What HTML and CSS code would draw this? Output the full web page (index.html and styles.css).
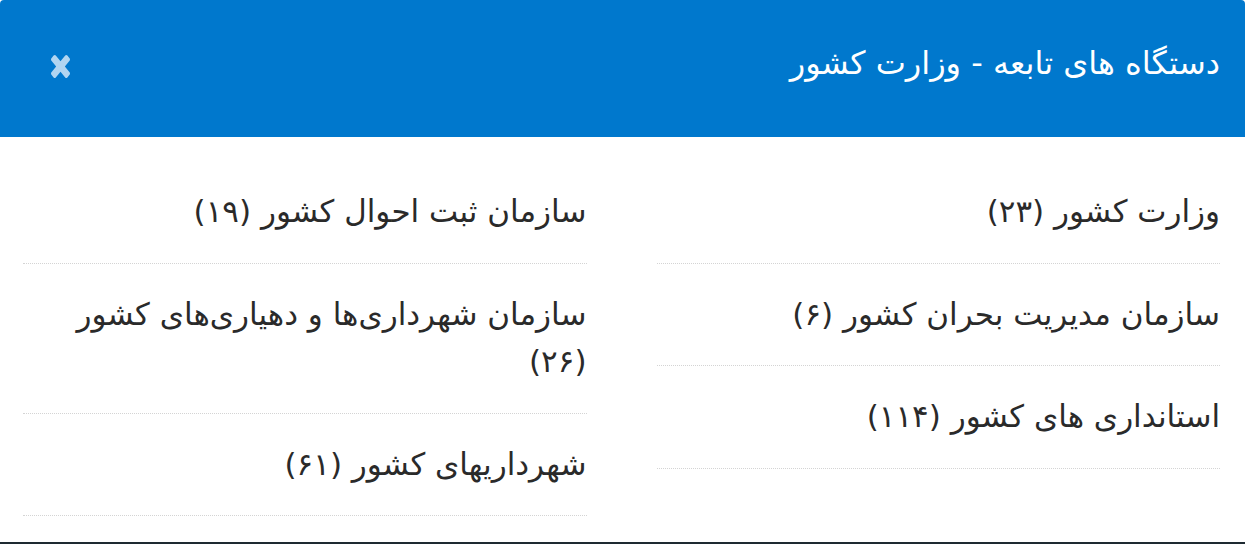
FILE: index.html
```html
<!DOCTYPE html>
<html lang="fa" dir="rtl">
<head>
<meta charset="utf-8">
<title>دستگاه های تابعه - وزارت کشور</title>
<link rel="stylesheet" href="styles.css">
</head>
<body>
<div class="modal">
  <header class="modal-head">
    <h1 class="title">دستگاه های تابعه - وزارت کشور</h1>
    <button class="close" aria-label="بستن">
      <svg class="close-icon" viewBox="110 258 1188 1188" preserveAspectRatio="none" aria-hidden="true">
        <path d="M1298 1214q0 40-28 68l-136 136q-28 28-68 28t-68-28l-294-294-294 294q-28 28-68 28t-68-28l-136-136q-28-28-28-68t28-68l294-294-294-294q-28-28-28-68t28-68l136-136q28-28 68-28t68 28l294 294 294-294q28-28 68-28t68 28l136 136q28 28 28 68t-28 68l-294 294 294 294q28 28 28 68z"/>
      </svg>
    </button>
  </header>
  <div class="modal-body">
    <ul class="col">
      <li class="item"><a href="#">وزارت کشور (۲۳)</a></li>
      <li class="item"><a href="#">سازمان مدیریت بحران کشور (۶)</a></li>
      <li class="item"><a href="#">استانداری های کشور (۱۱۴)</a></li>
    </ul>
    <ul class="col">
      <li class="item"><a href="#">سازمان ثبت احوال کشور (۱۹)</a></li>
      <li class="item"><a href="#">سازمان شهرداری‌ها و دهیاری‌های کشور (۲۶)</a></li>
      <li class="item"><a href="#">شهرداریهای کشور (۶۱)</a></li>
    </ul>
  </div>
</div>
<div class="backdrop-edge"></div>
</body>
</html>
```
FILE: styles.css
```css
* { box-sizing: border-box; }
html, body { margin: 0; padding: 0; height: 100%; }
body {
  font-family: "DejaVu Sans", sans-serif;
  background: #ffffff;
  color: #2a2a2a;
  display: flex;
  flex-direction: column;
  overflow: hidden;
}
.modal {
  flex: 1;
  background: #fff;
  border-radius: 4px 4px 0 0;
  overflow: hidden;
}
.modal-head {
  height: 137px;
  background: #0078cd;
  display: flex;
  align-items: center;
  justify-content: space-between;
  padding: 0 25px 10px 51px;
}
.title {
  margin: 0;
  color: #ffffff;
  font-weight: normal;
  font-size: 32px;
  line-height: 1.4;
}
.close {
  background: none;
  border: 0;
  padding: 0;
  margin-top: 6px;
  display: flex;
  cursor: pointer;
}
.close-icon {
  width: 19px;
  height: 23px;
  fill: #b1d5f1;
}
.modal-body {
  display: grid;
  grid-template-columns: 1fr 1fr;
  column-gap: 70px;
  padding: 24px 25px 0 23px;
}
.col {
  list-style: none;
  margin: 0;
  padding: 0;
}
.item {
  border-bottom: 1px dotted #d4d4d4;
  padding: 27px 0 27px;
  font-size: 31px;
  line-height: 47.5px;
}
.item a {
  color: #2a2a2a;
  text-decoration: none;
}
.backdrop-edge {
  height: 2px;
  background: #1e2a31;
}
```
